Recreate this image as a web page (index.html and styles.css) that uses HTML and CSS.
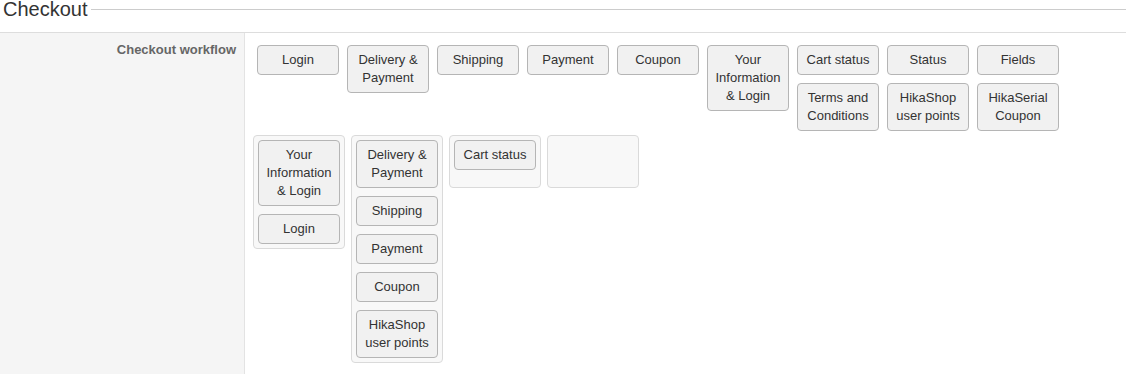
FILE: index.html
```html
<!DOCTYPE html>
<html>
<head>
<meta charset="utf-8">
<link rel="stylesheet" href="styles.css">
</head>
<body>
<div class="legend">
  <span class="legend-text">Checkout</span>
  <span class="legend-line"></span>
</div>
<div class="row">
  <div class="label">Checkout workflow</div>
  <div class="content">
    <div class="available">
      <div class="col"><div class="btn">Login</div></div>
      <div class="col"><div class="btn">Delivery &amp; Payment</div></div>
      <div class="col"><div class="btn">Shipping</div></div>
      <div class="col"><div class="btn">Payment</div></div>
      <div class="col"><div class="btn">Coupon</div></div>
      <div class="col"><div class="btn">Your Information &amp; Login</div></div>
      <div class="col"><div class="btn">Cart status</div><div class="btn">Terms and Conditions</div></div>
      <div class="col"><div class="btn">Status</div><div class="btn">HikaShop user points</div></div>
      <div class="col"><div class="btn">Fields</div><div class="btn">HikaSerial Coupon</div></div>
    </div>
    <div class="steps">
      <div class="group">
        <div class="btn">Your Information &amp; Login</div>
        <div class="btn">Login</div>
      </div>
      <div class="group">
        <div class="btn">Delivery &amp; Payment</div>
        <div class="btn">Shipping</div>
        <div class="btn">Payment</div>
        <div class="btn">Coupon</div>
        <div class="btn">HikaShop user points</div>
      </div>
      <div class="group">
        <div class="btn">Cart status</div>
      </div>
      <div class="group"></div>
    </div>
  </div>
</div>
</body>
</html>
```
FILE: styles.css
```css
html, body {
  margin: 0;
  padding: 0;
  background: #ffffff;
  font-family: "Liberation Sans", Arial, sans-serif;
  color: #333333;
}

.legend {
  display: flex;
  align-items: flex-start;
  height: 32px;
}

.legend-text {
  font-size: 20px;
  line-height: 19px;
  padding-left: 3px;
  color: #333333;
}

.legend-line {
  flex: 1;
  height: 1px;
  margin-top: 9px;
  margin-left: 3px;
  background: #cccccc;
}

.row {
  display: flex;
  border-top: 1px solid #dddddd;
}

.label {
  width: 236px;
  flex: none;
  padding: 8px 8px 0 0;
  background: #f5f5f5;
  border-right: 1px solid #e3e3e3;
  text-align: right;
  font-size: 13px;
  line-height: 18px;
  font-weight: bold;
  color: #666666;
}

.content {
  flex: 1;
  padding: 12px 8px 12px 8px;
  display: flex;
  flex-direction: column;
  gap: 4px;
}

.available {
  display: flex;
  align-items: flex-start;
  gap: 8px;
  padding-left: 4px;
}

.col {
  display: flex;
  flex-direction: column;
  gap: 8px;
}

.btn {
  box-sizing: border-box;
  width: 82px;
  padding: 5px 4px;
  border: 1px solid #b5b5b5;
  border-radius: 4px;
  background: #f1f1f1;
  font-size: 13px;
  line-height: 18px;
  text-align: center;
  color: #333333;
}

.steps {
  display: flex;
  align-items: flex-start;
  gap: 6px;
}

.group {
  box-sizing: border-box;
  width: 92px;
  min-height: 53px;
  padding: 4px;
  border: 1px solid #dadada;
  border-radius: 4px;
  background: #f8f8f8;
  display: flex;
  flex-direction: column;
  gap: 8px;
}
```
